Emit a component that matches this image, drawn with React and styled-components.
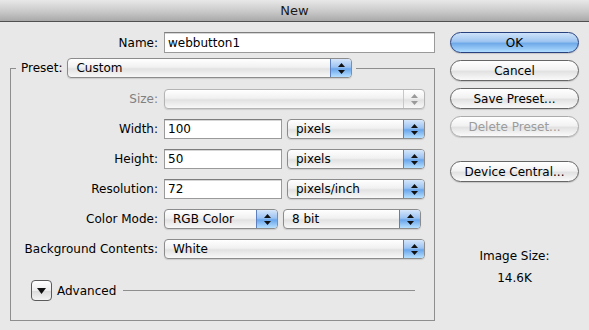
import styled, { createGlobalStyle, css } from "styled-components";

const GlobalStyle = createGlobalStyle`
  html, body {
    margin: 0;
    padding: 0;
    background: #e8e8e8;
  }
  body {
    font-family: "DejaVu Sans", "Liberation Sans", sans-serif;
    font-size: 12px;
    color: #000;
  }
`;

const Window = styled.div`
  width: 589px;
  height: 330px;
  background: #e8e8e8;
  display: flex;
  flex-direction: column;
  overflow: hidden;
`;

const TitleBar = styled.div`
  height: 21px;
  flex: none;
  border-bottom: 1px solid #505050;
  background: linear-gradient(#e8e8e8, #c9c9c9 55%, #a9a9a9);
  display: flex;
  align-items: center;
  justify-content: center;
  font-size: 13px;
  color: #1a1a1a;
`;

const Body = styled.div`
  display: flex;
  gap: 15px;
  padding: 10px 0 0 10px;
`;

const LeftColumn = styled.div`
  width: 425px;
  display: flex;
  flex-direction: column;
`;

const Row = styled.div`
  display: flex;
  align-items: center;
  height: ${(p) => p.$h || 20}px;
  gap: 6px;
`;

const Label = styled.div`
  width: ${(p) => p.$w || 147}px;
  text-align: right;
  white-space: nowrap;
  color: ${(p) => (p.$disabled ? "#808080" : "#000")};
`;

const Controls = styled.div`
  display: flex;
  gap: 5px;
`;

const TextField = styled.div`
  box-sizing: border-box;
  width: ${(p) => p.$w}px;
  height: ${(p) => p.$h || 20}px;
  background: #fff;
  border: 1px solid #9a9a9a;
  border-top-color: #7d7d7d;
  box-shadow: inset 0 1px 0 #d6d6d6;
  padding: 0 3px;
  display: flex;
  align-items: center;
  font-size: 12px;
`;

const Popup = styled.div`
  box-sizing: border-box;
  width: ${(p) => p.$w}px;
  height: 20px;
  border: 1px solid ${(p) => (p.$disabled ? "#b4b4b4" : "#8c8c8c")};
  border-radius: 4px;
  background: linear-gradient(#ffffff, #f1f1f1 45%, #e2e2e2 55%, #f8f8f8);
  display: flex;
  align-items: stretch;
  overflow: hidden;
  box-shadow: 0 1px 1px rgba(0, 0, 0, 0.12);
`;

const PopupText = styled.div`
  flex: 1;
  padding-left: 8px;
  display: flex;
  align-items: center;
  white-space: nowrap;
`;

const PopupArrow = styled.div`
  width: 20px;
  flex: none;
  display: flex;
  align-items: center;
  justify-content: center;
  ${(p) =>
    p.$disabled
      ? css`
          border-left: 1px solid #c8c8c8;
        `
      : css`
          border-left: 1px solid #5c7fbf;
          background: linear-gradient(#d6e6fb, #9cc3f2 45%, #6aa6ec 55%, #b6e0ff);
        `}
`;

const Arrows = ({ disabled }) => (
  <svg width="7" height="11" viewBox="0 0 7 11">
    <path d="M3.5 0 L7 4 L0 4 Z" fill={disabled ? "#9a9a9a" : "#111"} />
    <path d="M0 7 L7 7 L3.5 11 Z" fill={disabled ? "#9a9a9a" : "#111"} />
  </svg>
);

const Select = ({ w, children, disabled }) => (
  <Popup $w={w} $disabled={disabled}>
    <PopupText>{children}</PopupText>
    <PopupArrow $disabled={disabled}>
      <Arrows disabled={disabled} />
    </PopupArrow>
  </Popup>
);

const Group = styled.fieldset`
  margin: 5px 0 0 0;
  padding: 11px 0 19px 0;
  border: 1px solid #8e8e8e;
  min-width: 0;
  display: flex;
  flex-direction: column;
  gap: 10px;
`;

const Legend = styled.legend`
  margin-left: 5px;
  padding: 0 4px 0 5px;
  display: flex;
  align-items: center;
  gap: 5px;
`;

const AdvancedRow = styled.div`
  display: flex;
  align-items: center;
  gap: 5px;
  margin: 11px 19px 0 20px;
  height: 21px;
`;

const Disclosure = styled.div`
  box-sizing: border-box;
  width: 21px;
  height: 21px;
  border: 1px solid #5a5a5a;
  border-radius: 4px;
  background: linear-gradient(#ffffff, #eeeeee 50%, #dcdcdc 55%, #f4f4f4);
  display: flex;
  align-items: center;
  justify-content: center;
  flex: none;
`;

const Rule = styled.div`
  flex: 1;
  height: 1px;
  background: #8e8e8e;
  margin-left: 2px;
`;

const RightColumn = styled.div`
  width: 129px;
  display: flex;
  flex-direction: column;
  gap: 7px;
`;

const Button = styled.div`
  box-sizing: border-box;
  height: 21px;
  border-radius: 11px;
  display: flex;
  align-items: center;
  justify-content: center;
  white-space: nowrap;
  margin-top: ${(p) => p.$mt || 0}px;
  border: 1px solid ${(p) => (p.$primary ? "#27407e" : p.$disabled ? "#ababab" : "#666")};
  color: ${(p) => (p.$disabled ? "#9c9c9c" : "#000")};
  background: ${(p) =>
    p.$primary
      ? "linear-gradient(#cfe2f9, #9ec5f1 45%, #6faae9 55%, #b0dcff)"
      : "linear-gradient(#ffffff, #f2f2f2 45%, #e2e2e2 55%, #fafafa)"};
  box-shadow: 0 1px 1px rgba(0, 0, 0, 0.15);
`;

const InfoText = styled.div`
  text-align: center;
  margin-top: ${(p) => p.$mt || 0}px;
  line-height: 15px;
`;

export default function App() {
  return (
    <>
      <GlobalStyle />
      <Window>
        <TitleBar>New</TitleBar>
        <Body>
          <LeftColumn>
            <Row $h={21}>
              <Label $w={148}>Name:</Label>
              <TextField $w={271} $h={21}>webbutton1</TextField>
            </Row>
            <Group>
              <Legend>
                Preset:
                <Select w={285}>Custom</Select>
              </Legend>
              <Row>
                <Label $disabled>Size:</Label>
                <Select w={261} disabled />
              </Row>
              <Row>
                <Label>Width:</Label>
                <Controls>
                  <TextField $w={118}>100</TextField>
                  <Select w={138}>pixels</Select>
                </Controls>
              </Row>
              <Row>
                <Label>Height:</Label>
                <Controls>
                  <TextField $w={118}>50</TextField>
                  <Select w={138}>pixels</Select>
                </Controls>
              </Row>
              <Row>
                <Label>Resolution:</Label>
                <Controls>
                  <TextField $w={118}>72</TextField>
                  <Select w={138}>pixels/inch</Select>
                </Controls>
              </Row>
              <Row>
                <Label>Color Mode:</Label>
                <Controls>
                  <Select w={114}>RGB Color</Select>
                  <Select w={138} >8 bit</Select>
                </Controls>
              </Row>
              <Row>
                <Label>Background Contents:</Label>
                <Select w={261}>White</Select>
              </Row>
              <AdvancedRow>
                <Disclosure>
                  <svg width="9" height="6" viewBox="0 0 9 6">
                    <path d="M0 0 L9 0 L4.5 6 Z" fill="#111" />
                  </svg>
                </Disclosure>
                Advanced
                <Rule />
              </AdvancedRow>
            </Group>
          </LeftColumn>
          <RightColumn>
            <Button $primary>OK</Button>
            <Button>Cancel</Button>
            <Button>Save Preset...</Button>
            <Button $disabled>Delete Preset...</Button>
            <Button $mt={17}>Device Central...</Button>
            <InfoText $mt={60}>Image Size:</InfoText>
            <InfoText>14.6K</InfoText>
          </RightColumn>
        </Body>
      </Window>
    </>
  );
}
